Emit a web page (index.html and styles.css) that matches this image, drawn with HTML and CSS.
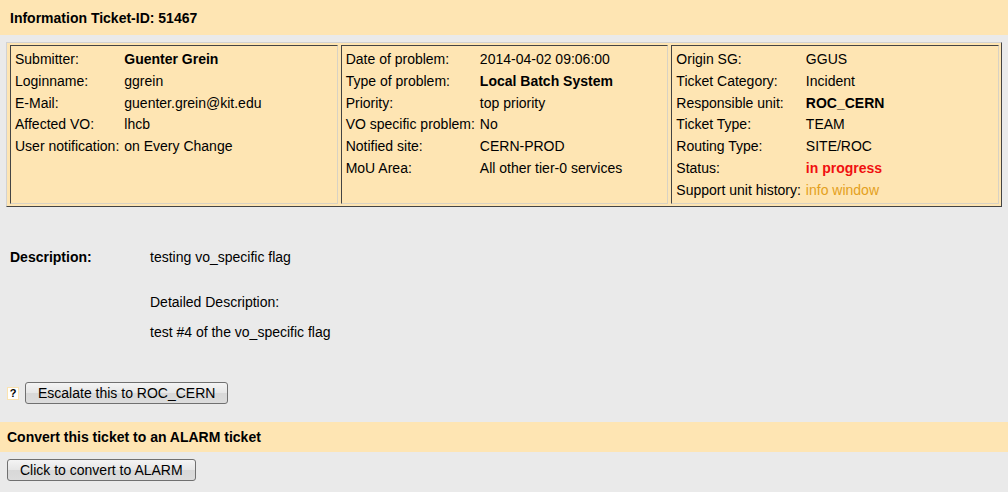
FILE: index.html
```html
<!DOCTYPE html>
<html lang="en">
<head>
    <meta charset="UTF-8">
    <title>Information Ticket-ID: 51467</title>
    <link rel="stylesheet" href="styles.css">
</head>
<body>
    <div class="ticket-header">Information Ticket-ID: 51467</div>

    <div class="ticket-info">
        <div class="info-cell">
            <div class="field-list">
                <span>Submitter:</span><b>Guenter Grein</b>
                <span>Loginname:</span><span>ggrein</span>
                <span>E-Mail:</span><span>guenter.grein@kit.edu</span>
                <span>Affected VO:</span><span>lhcb</span>
                <span>User notification:</span><span>on Every Change</span>
            </div>
        </div>
        <div class="info-cell">
            <div class="field-list">
                <span>Date of problem:</span><span>2014-04-02 09:06:00</span>
                <span>Type of problem:</span><b>Local Batch System</b>
                <span>Priority:</span><span>top priority</span>
                <span>VO specific problem:</span><span>No</span>
                <span>Notified site:</span><span>CERN-PROD</span>
                <span>MoU Area:</span><span>All other tier-0 services</span>
            </div>
        </div>
        <div class="info-cell">
            <div class="field-list">
                <span>Origin SG:</span><span>GGUS</span>
                <span>Ticket Category:</span><span>Incident</span>
                <span>Responsible unit:</span><b>ROC_CERN</b>
                <span>Ticket Type:</span><span>TEAM</span>
                <span>Routing Type:</span><span>SITE/ROC</span>
                <span>Status:</span><b class="status">in progress</b>
                <span>Support unit history:</span><a class="history-link" href="#">info window</a>
            </div>
        </div>
    </div>

    <div class="description">
        <div class="desc-label">Description:</div>
        <div class="desc-body">
            <p class="desc-short">testing vo_specific flag</p>
            <p class="desc-title">Detailed Description:</p>
            <p class="desc-text">test #4 of the vo_specific flag</p>
        </div>
    </div>

    <div class="escalate">
        <span class="help-icon">?</span>
        <button class="btn">Escalate this to ROC_CERN</button>
    </div>

    <div class="section-bar">Convert this ticket to an ALARM ticket</div>
    <div class="convert">
        <button class="btn">Click to convert to ALARM</button>
    </div>
</body>
</html>
```

FILE: styles.css
```css
body {
    background-color: #eaeaea;
    color: #000;
    font-family: "Liberation Sans", Arial, sans-serif;
    font-size: 14px;
    margin: 0;
    padding: 0;
}

.ticket-header {
    background: #fee5b3;
    height: 35px;
    padding-left: 10px;
    display: flex;
    align-items: center;
    font-weight: bold;
}

/* ticket info table */
.ticket-info {
    display: flex;
    gap: 3px;
    width: 996px;
    box-sizing: border-box;
    margin: 7px 6px 0;
    padding: 2px 2px 2px 3px;
    background: #fee5b3;
    border: 1px solid;
    border-color: #d2d2d2 #444 #444 #d2d2d2;
}

.info-cell {
    flex: 1;
    min-height: 154px;
    padding: 3px 4px 0;
    border: 1px solid;
    border-color: #444 #d8d2c4 #d8d2c4 #444;
}

.field-list {
    display: grid;
    grid-template-columns: max-content 1fr;
    column-gap: 5px;
    line-height: 21.8px;
    white-space: nowrap;
}

.status {
    color: #f01010;
}

.history-link {
    color: #e4a020;
    text-decoration: none;
}

/* description */
.description {
    display: flex;
    margin-top: 39px;
    padding-left: 10px;
    line-height: 22px;
}

.desc-label {
    width: 140px;
    font-weight: bold;
}

.desc-body p {
    margin: 0;
}

.desc-title {
    margin-top: 23px !important;
}

.desc-text {
    margin-top: 8px !important;
}

/* buttons */
.escalate {
    display: flex;
    align-items: center;
    gap: 6px;
    margin-top: 39px;
    padding-left: 7px;
}

.help-icon {
    width: 10px;
    height: 11px;
    background: #fff;
    border: 1px solid #fbe3b0;
    font-size: 11px;
    font-weight: bold;
    line-height: 11px;
    text-align: center;
}

.btn {
    height: 22px;
    padding: 0 12px;
    font-family: "Liberation Sans", Arial, sans-serif;
    font-size: 14px;
    color: #000;
    background: linear-gradient(#f4f4f4, #e6e6e6 50%, #d8d8d8 51%, #dcdcdc);
    border: 1px solid #707070;
    border-radius: 3px;
}

.section-bar {
    background: #fee5b3;
    height: 30px;
    margin-top: 18px;
    padding-left: 7px;
    display: flex;
    align-items: center;
    font-weight: bold;
}

.convert {
    margin-top: 7px;
    padding-left: 7px;
}
```
